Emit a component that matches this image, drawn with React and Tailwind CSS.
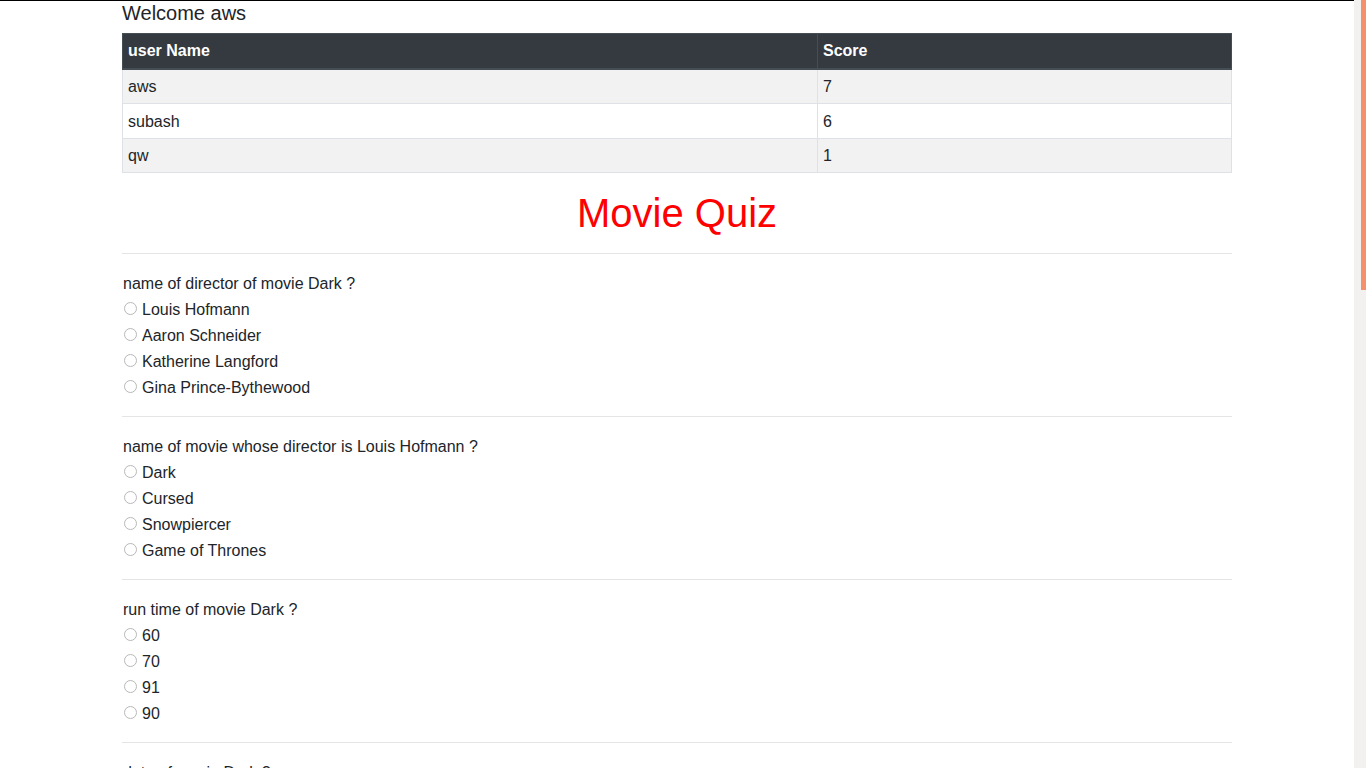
const scores = [
  { name: "aws", score: 7 },
  { name: "subash", score: 6 },
  { name: "qw", score: 1 },
];

const questions = [
  {
    q: "name of director of movie Dark ?",
    options: ["Louis Hofmann", "Aaron Schneider", "Katherine Langford", "Gina Prince-Bythewood"],
  },
  {
    q: "name of movie whose director is Louis Hofmann ?",
    options: ["Dark", "Cursed", "Snowpiercer", "Game of Thrones"],
  },
  {
    q: "run time of movie Dark ?",
    options: ["60", "70", "91", "90"],
  },
  {
    q: "date of movie Dark ?",
    options: ["2017", "2018", "2019", "2020"],
  },
];

function Question({ q, options }) {
  return (
    <div>
      <hr className="border-0 border-t border-[#e5e5e5]" />
      <div className="pt-[17px] pb-[15px]">
        <p className="h-[26px] leading-[26px] pl-[1px]">{q}</p>
        {options.map((o) => (
          <label key={o} className="flex items-center h-[26px] pl-[2px]">
            <span className="w-[13px] h-[13px] rounded-full border border-[#b8b8b8] bg-white mr-[5px] -mt-[3px]" />
            <span>{o}</span>
          </label>
        ))}
      </div>
    </div>
  );
}

export default function App() {
  return (
    <div className="flex h-screen overflow-hidden bg-white font-['Liberation_Sans',Arial,sans-serif] text-[16px] leading-6 text-[#212529]">
      {/* page */}
      <div className="flex-1 overflow-hidden border-t border-black">
        <div className="mx-auto w-[1140px] px-[15px]">
          <h5 className="text-[20px] leading-6 mb-2">Welcome aws</h5>

          <table className="w-full border-collapse border border-[#dee2e6] mb-4">
            <thead>
              <tr className="bg-[#343a40] text-white">
                <th className="w-[695px] text-left font-bold px-[5px] py-[4.8px] border border-[#454d55] border-b-2">user Name</th>
                <th className="text-left font-bold px-[5px] py-[4.8px] border border-[#454d55] border-b-2">Score</th>
              </tr>
            </thead>
            <tbody>
              {scores.map((s, i) => (
                <tr key={s.name} className={i % 2 === 0 ? "bg-[#f2f2f2]" : "bg-white"}>
                  <td className="px-[5px] pt-[5.5px] pb-[4.1px] border border-[#dee2e6]">{s.name}</td>
                  <td className="px-[5px] pt-[5.5px] pb-[4.1px] border border-[#dee2e6]">{s.score}</td>
                </tr>
              ))}
            </tbody>
          </table>

          <h1 className="text-center text-[40px] leading-[48px] text-[#ff0000]">Movie Quiz</h1>
          <div className="mt-4">
            {questions.map((item) => (
              <Question key={item.q} {...item} />
            ))}
          </div>
        </div>
      </div>

      {/* scrollbar */}
      <div className="w-[12px] bg-[#f2f1f0] flex justify-end">
        <div className="w-[5px] h-[290px] bg-[#f4916a]" />
      </div>
    </div>
  );
}
